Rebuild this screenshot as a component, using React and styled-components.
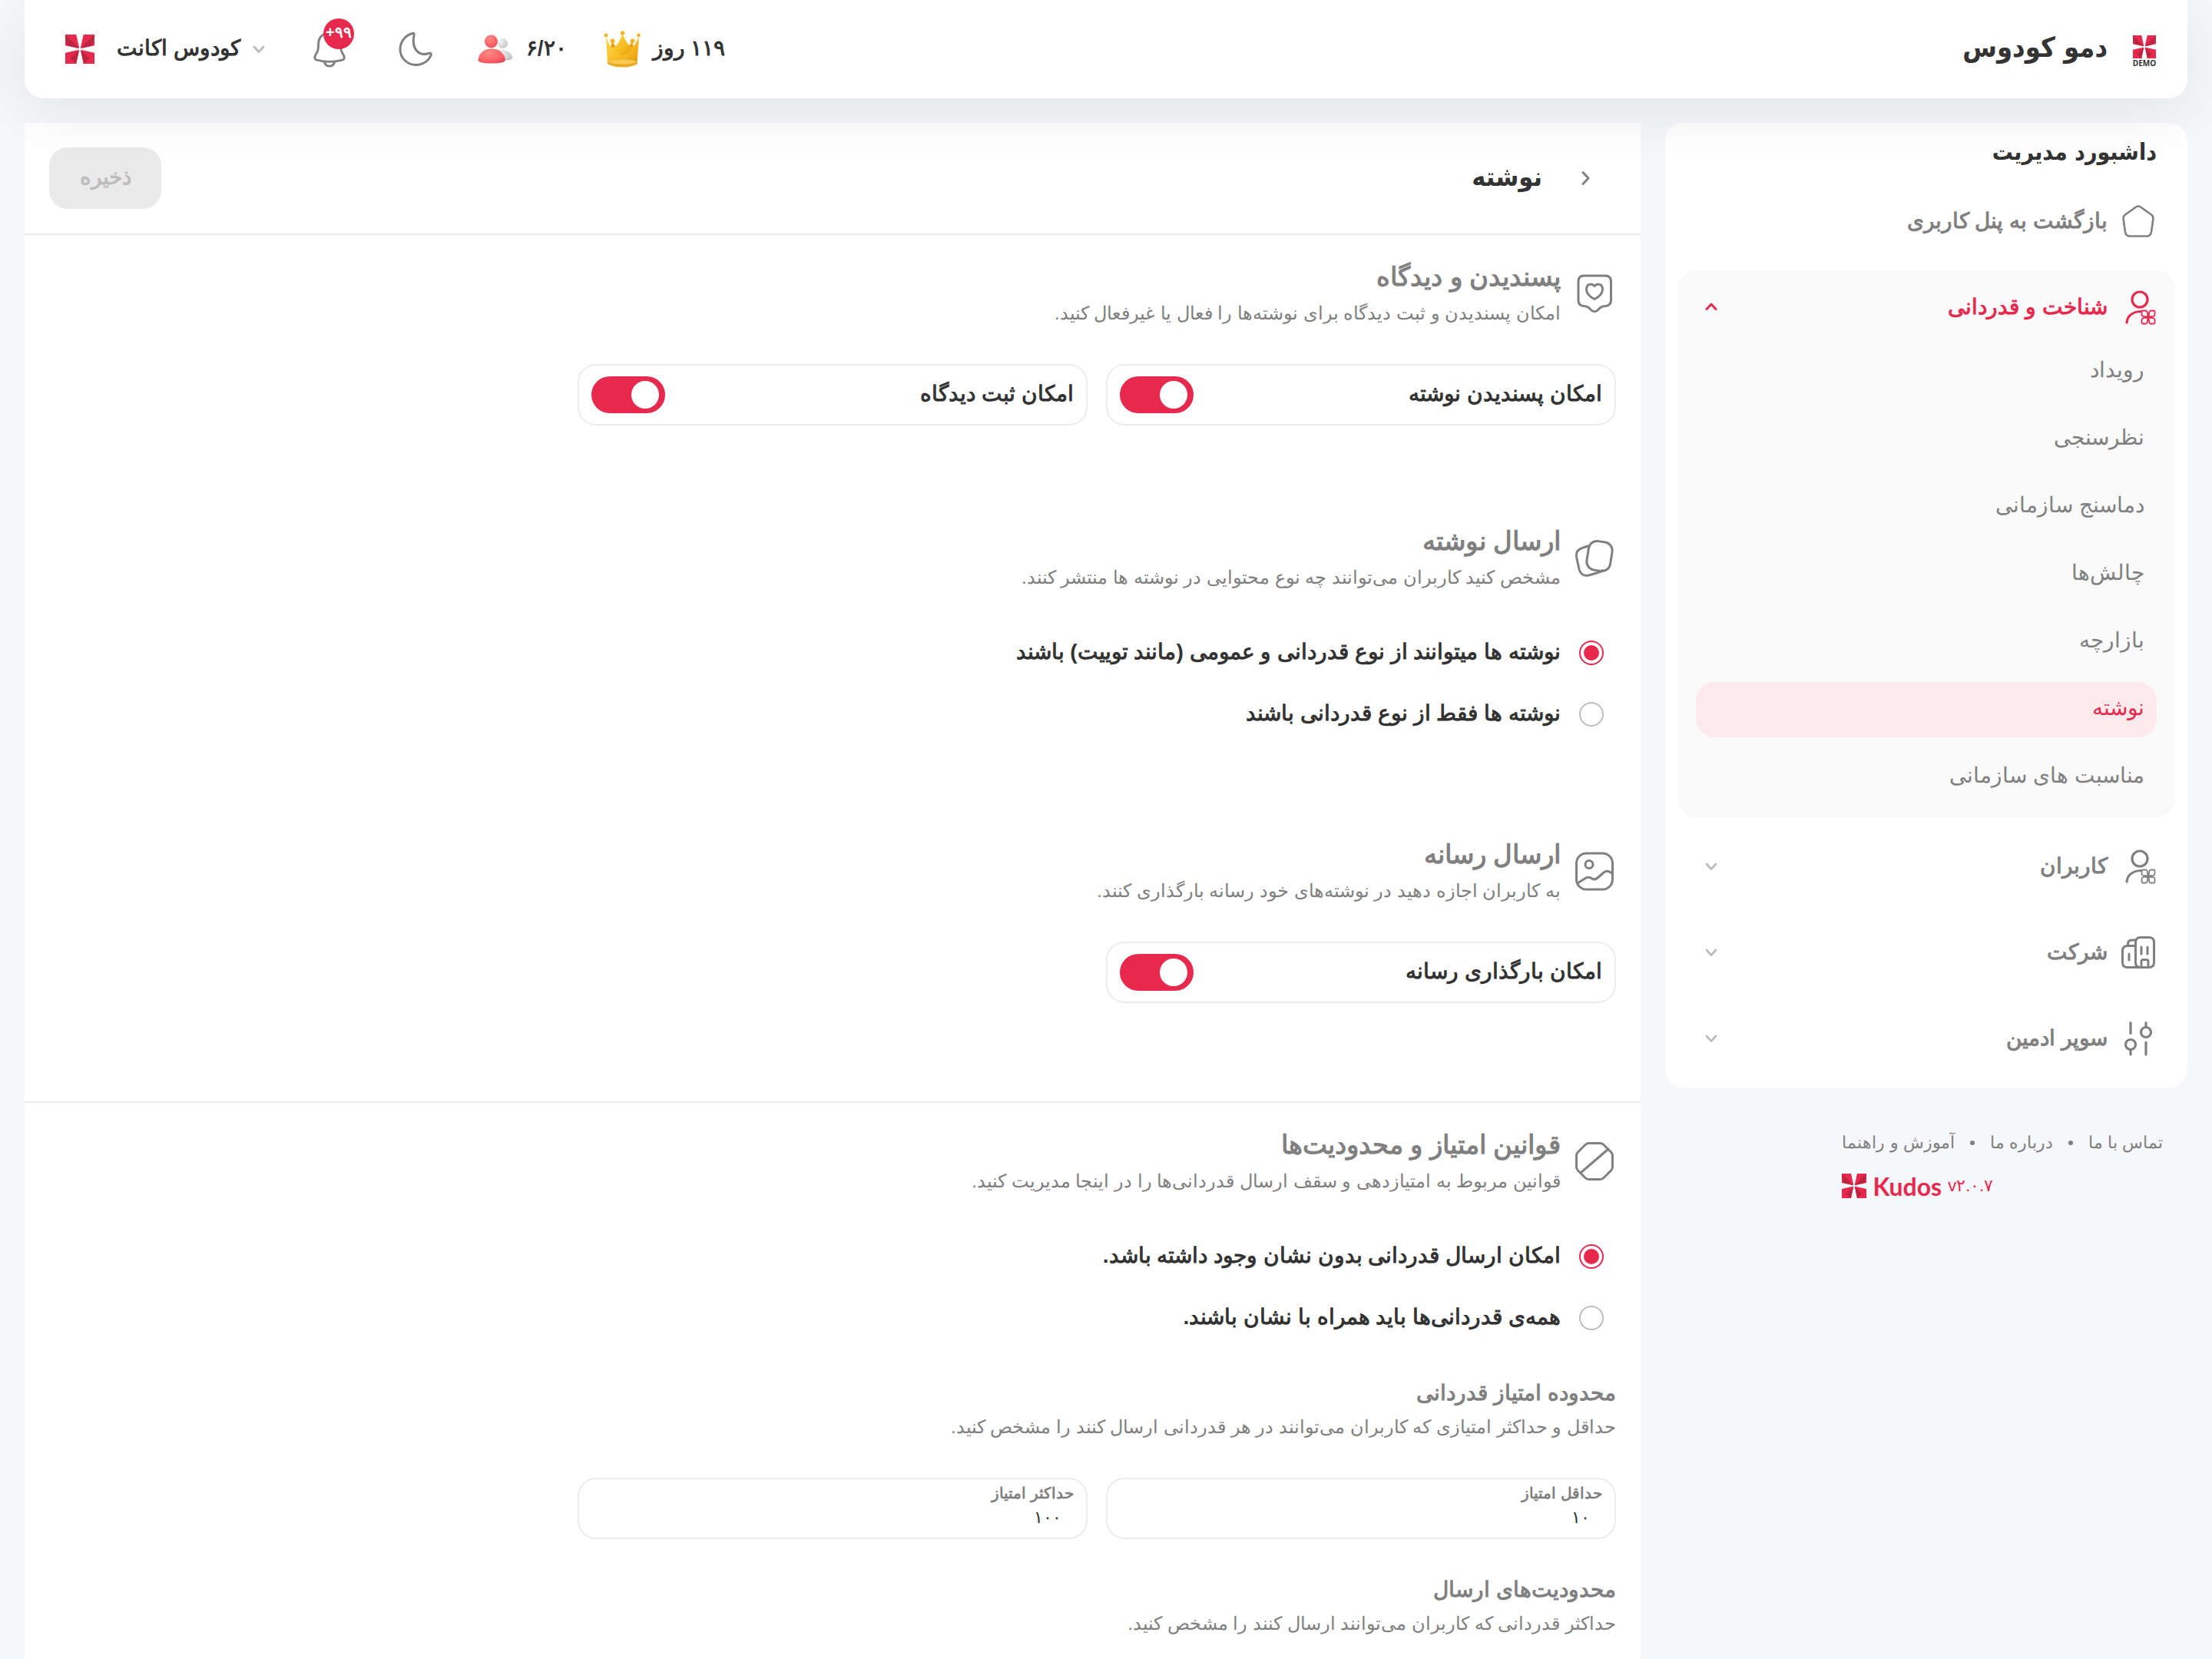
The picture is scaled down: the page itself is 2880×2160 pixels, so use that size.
import React, { useState } from 'react'
import styled, { createGlobalStyle, css } from 'styled-components'

const colors = {
  page: '#f5f7fb',
  text: '#333333',
  muted: '#808080',
  faint: '#bdbdbd',
  line: '#ededed',
  red: '#e7294d'
}

const GlobalStyle = createGlobalStyle`
  * {
    box-sizing: border-box;
  }

  body {
    margin: 0;
    background-color: ${colors.page};
    color: ${colors.text};
    font-family: 'Liberation Sans';
    font-size: 28px;
  }

  h1, h2, h3, p, ul {
    margin: 0;
    padding: 0;
  }

  ul {
    list-style: none;
  }

  button, input {
    font-family: inherit;
    color: inherit;
  }

  a {
    color: inherit;
    text-decoration: none;
  }
`

const resetButton = css`
  padding: 0;
  border: 0;
  background: none;
  cursor: pointer;
`

const strongFont = css`
  font-family: 'DejaVu Sans Condensed', 'DejaVu Sans', sans-serif;
  font-weight: 700;
  color: ${colors.text};
`

/* icons */

const Svg = styled.svg`
  display: block;
  flex: none;
  width: ${p => p.$size}px;
  height: ${p => p.$size}px;
  fill: none;
  stroke: currentColor;
  stroke-width: ${p => p.$stroke || 3};
  stroke-linecap: round;
  stroke-linejoin: round;
`

const HomeIcon = () => (
  <Svg $size={48} viewBox='0 0 48 48' $stroke={2.6}>
    <path d='M21 5.5Q24 3.5 27 5.5L41 15.5Q44 18 43.4 21L41 38Q40 43.5 35 43.5H13Q8 43.5 7 38L4.6 21Q4 18 7 15.5Z' />
  </Svg>
)

const petal = 'M36.5 36.5L35.8 30.5Q35.3 28.5 33.5 28.5H30Q28.5 28.5 28.5 30V33.5Q28.5 35.3 30.5 35.8Z'

const UserIcon = () => (
  <Svg $size={48} viewBox='0 0 48 48' $stroke={3.2}>
    <circle cx='26' cy='14' r='10' />
    <path d='M9 44C10 35 17 30 27 29.5' />
    <g strokeWidth='1.8' strokeLinejoin='miter'>
      <path d={petal} />
      <path d={petal} transform='rotate(90 37 37)' />
      <path d={petal} transform='rotate(180 37 37)' />
      <path d={petal} transform='rotate(270 37 37)' />
    </g>
  </Svg>
)

const CompanyIcon = () => (
  <Svg $size={48} viewBox='0 0 48 48' $stroke={3}>
    <path d='M27 4.5H38Q44.5 4.5 44.5 11V37Q44.5 43.5 38 43.5H27Q20.5 43.5 20.5 37V11Q20.5 4.5 27 4.5Z' />
    <path d='M27 43.5H10Q3.5 43.5 3.5 37V22Q3.5 15.5 10 15.5H20M10.5 15.5V13Q10.5 8 15.5 8H20' />
    <path d='M28 17V26M36 17V26M12 26V34M28 43V36Q28 33.5 30.5 33.5H34.5Q37 33.5 37 36V43' />
  </Svg>
)

const SlidersIcon = () => (
  <Svg $size={48} viewBox='0 0 48 48' $stroke={3.2}>
    <path d='M14 3.5V17.5M14 39V45M34 3.5V9M34 29V45' />
    <circle cx='14' cy='32' r='6.5' />
    <circle cx='34' cy='16' r='6.5' />
  </Svg>
)

const HeartIcon = () => (
  <Svg $size={56} viewBox='0 0 56 56'>
    <path d='M14 5H42Q49.5 5 49.5 12.5V37Q49.5 44 42 44.5C38 44.5 36 45.5 33 49Q28 54.5 23 49C20 45.5 18 44.5 14 44.5Q7 44 7 37V12.5Q7 5 14 5Z' />
    <path d='M28 18.5C24 14 17.5 16 17.5 22.5C17.5 29 24 33.5 28 35.5C32 33.5 38.5 29 38.5 22.5C38.5 16 32 14 28 18.5Z' />
  </Svg>
)

const CardsIcon = () => (
  <Svg $size={56} viewBox='0 0 56 56'>
    <rect x='19' y='7' width='31' height='38' rx='11' transform='rotate(9 34 26)' />
    <path d='M19 13L12 15.5Q3.5 18 4.5 27L8 43Q10.5 53 20.5 51L31 48Q36 46.5 38.5 44.5' />
  </Svg>
)

const ImageIcon = () => (
  <Svg $size={56} viewBox='0 0 56 56'>
    <rect x='4.5' y='5' width='47' height='47' rx='13' />
    <circle cx='21' cy='19.5' r='5' />
    <path d='M6 44L16 37.5Q20 35 24 37.5Q28 40.5 32 37L40 30Q45 26 51.5 31.5' />
  </Svg>
)

const ForbiddenIcon = () => (
  <Svg $size={56} viewBox='0 0 56 56'>
    <path d='M20.5 4.5H35.5Q38 4.5 40 6.5L49.5 16Q51.5 18 51.5 20.5V35.5Q51.5 38 49.5 40L40 49.5Q38 51.5 35.5 51.5H20.5Q18 51.5 16 49.5L6.5 40Q4.5 38 4.5 35.5V20.5Q4.5 18 6.5 16L16 6.5Q18 4.5 20.5 4.5ZM10 43L46 12' />
  </Svg>
)

const MoonIcon = () => (
  <Svg $size={48} viewBox='0 0 48 48'>
    <path d='M20 3.5C10 6 4 15 4 24C4 35.5 13 44.5 24.5 44.5C33.5 44.5 41 39.5 44 32C45 29.5 43.5 28.5 41 29.5C28 34 18.5 23 22 6C22.5 3.5 21.5 3 20 3.5Z' />
  </Svg>
)

const BellIcon = () => (
  <Svg $size={48} viewBox='0 0 48 50'>
    <path d='M24 3C15 3 9 9 9 18C9 26 8 28 5 33C2.5 38 5 39.5 8 40C18 42.5 30 42.5 40 40C43 39.5 45.5 38 43 33C40 28 39 26 39 18C39 9 33 3 24 3Z' />
    <path d='M17 42C19 50 29 50 31 42' />
  </Svg>
)

const chevrons = {
  down: 'M6 9L12 15.500L18 9',
  up: 'M6 14.500L12 8L18 14.500',
  right: 'M9 4.500L16 12L9 19.500'
}

const Chevron = ({ direction }) => (
  <Svg $size={24} viewBox='0 0 24 24' $stroke={3}>
    <path d={chevrons[direction]} />
  </Svg>
)

const LogoSvg = styled.svg`
  display: block;
  flex: none;
  width: ${p => p.$size}px;
  height: ${p => p.$size}px;
`

const KudosLogo = ({ size }) => (
  <LogoSvg $size={size} viewBox='0 0 40 40'>
    {[[1, 1], [-1, 1], [1, -1], [-1, -1]].map(([x, y]) => (
      <g key={`${x}${y}`} transform={`translate(20 20) scale(${x} ${y})`}>
        <path fill={colors.red} d='M-20 -20H-5L-1 -2L-2 -1L-20 -5Z' />
        <path fill='#b2243f' d={y > 0 ? 'M-20 -20L-17 -5L-1.5 -1.5Z' : 'M-5 -20L-13 -13L-1.5 -1.5Z'} opacity='0.8' />
      </g>
    ))}
  </LogoSvg>
)

const CrownIcon = () => (
  <LogoSvg $size={48} viewBox='0 0 48 48'>
    <defs>
      <linearGradient id='gold' x1='0' y1='0' x2='1' y2='1'>
        <stop offset='0' stopColor='#ffd94f' />
        <stop offset='0.6' stopColor='#f6b91f' />
        <stop offset='1' stopColor='#dc8f0c' />
      </linearGradient>
    </defs>
    <path fill='#e5a11a' d='M11 14L24 33L37 14L42 32H6Z' />
    <path fill='url(#gold)' d='M24.5 4Q30 18 38 23L35 34H13L11 23Q20 18 24.5 4Z' />
    <path fill='url(#gold)' d='M3 7Q7 20 12 23Q18 31 24 32Q33 30 36 23Q42 18 46 7L43.5 42Q38 47.5 24.5 47.5Q10 47.5 5 42Z' />
    <ellipse cx='24.5' cy='42' rx='19.5' ry='5' fill='#eaa91f' />
    <ellipse cx='24.5' cy='40.5' rx='18' ry='3' fill='#f9c952' />
    <g fill='#f2b52c'>
      <circle cx='24.5' cy='3' r='2.8' />
      <circle cx='3' cy='6' r='2.4' />
      <circle cx='45.5' cy='6' r='2.4' />
      <circle cx='11.5' cy='13.5' r='3' />
      <circle cx='37.5' cy='13.5' r='3' />
    </g>
  </LogoSvg>
)

const PeopleIcon = () => (
  <LogoSvg $size={48} viewBox='0 0 48 48'>
    <defs>
      <radialGradient id='coral' cx='0.4' cy='0.3' r='0.8'>
        <stop offset='0' stopColor='#ff8a86' />
        <stop offset='0.6' stopColor='#fb6468' />
        <stop offset='1' stopColor='#e2485a' />
      </radialGradient>
      <radialGradient id='silver' cx='0.3' cy='0.3' r='0.8'>
        <stop offset='0' stopColor='#f4f4f4' />
        <stop offset='1' stopColor='#c4c4c6' />
      </radialGradient>
    </defs>
    <path fill='url(#silver)' d='M22 38Q22 25 33 25Q44 26 46.5 35Q46 38.5 38 38.5Z' />
    <circle cx='33.5' cy='16.5' r='6.5' fill='url(#silver)' />
    <path fill='url(#coral)' d='M1.5 38Q4 23.5 19 23.5Q34 23.5 37 38Q37 42.5 19 42.5Q1.5 42.5 1.5 38Z' />
    <circle cx='18.5' cy='14' r='8.5' fill='url(#coral)' />
  </LogoSvg>
)

/* header */

const Header = styled.header`
  position: relative;
  z-index: 1;
  display: flex;
  align-items: center;
  justify-content: space-between;
  height: 128px;
  margin: 0 32px;
  padding: 0 32px 0 48px;
  border-radius: 0 0 24px 24px;
  background-color: #fff;
  box-shadow: 0 20px 80px rgba(0, 0, 0, 0.08);
`

const Brand = styled.a`
  display: flex;
  align-items: center;
  gap: 24px;
  font-size: 36px;
  line-height: 48px;
  ${strongFont}
`

const BrandName = styled.span`
  padding-bottom: 4px;
`

const BrandMark = styled.span`
  display: flex;
  flex-direction: column;
  align-items: center;
  width: 48px;
  padding-top: 6px;
  font-family: 'Open Sans', sans-serif;
  font-size: 10px;
  line-height: 12px;
`

const HeaderTools = styled.div`
  display: flex;
  align-items: center;
  gap: 40px;
`

const Stats = styled.div`
  display: flex;
  gap: 48px;
`

const Stat = styled.span`
  display: flex;
  align-items: center;
  gap: 16px;
  font-weight: 700;
`

const Actions = styled.div`
  display: flex;
  gap: 32px;
`

const IconButton = styled.button`
  ${resetButton}
  position: relative;
  display: grid;
  place-items: center;
  width: 80px;
  height: 80px;
  color: ${colors.muted};
`

const Badge = styled.span`
  position: absolute;
  top: 0;
  left: 32px;
  width: 40px;
  height: 40px;
  border-radius: 50%;
  background-color: ${colors.red};
  color: #fff;
  font-size: 20px;
  font-weight: 700;
  line-height: 36px;
  text-align: center;
`

const AccountButton = styled.button`
  ${resetButton}
  display: flex;
  align-items: center;
  gap: 24px;
  font-size: 28px;
  font-weight: 700;
  color: ${colors.text};
`

const AccountName = styled.span`
  display: flex;
  align-items: center;
  gap: 12px;

  svg {
    color: ${colors.faint};
  }
`

const LogoBox = styled.span`
  display: grid;
  place-items: center;
  width: 48px;
`

/* sidebar */

const Layout = styled.div`
  display: grid;
  grid-template-columns: repeat(4, 1fr);
  gap: 32px;
  min-height: calc(100vh - 128px);
  padding: 32px 32px 0;
`

const Sidebar = styled.aside`
  grid-column: span 1;
`

const SideCard = styled.nav`
  display: flex;
  flex-direction: column;
  gap: 16px;
  padding: 0 16px 16px;
  border-radius: 24px;
  background-color: #fff;
`

const SideTitle = styled.h2`
  height: 64px;
  padding: 0 24px;
  font-size: 30px;
  line-height: 76px;
  ${strongFont}
`

const sideRow = css`
  display: flex;
  align-items: center;
  gap: 16px;
  width: 100%;
  height: 96px;
  padding: 0 24px;
  font-size: 28px;
  font-weight: 700;
  color: ${p => p.$active ? colors.red : colors.muted};
`

const SideLink = styled.a`
  ${sideRow}
`

const SideButton = styled.button`
  ${resetButton}
  ${sideRow}
`

const SideLabel = styled.span`
  flex: 1;
  padding-bottom: 2px;
  text-align: right;
`

const SideChevron = styled.span`
  display: grid;
  place-items: center;
  width: 40px;
  color: ${p => p.$active ? colors.red : colors.faint};
`

const SideGroup = styled.div`
  border-radius: 24px;
  background-color: ${p => p.$active ? '#fafafa' : 'transparent'};
`

const SubList = styled.ul`
  display: flex;
  flex-direction: column;
  gap: 16px;
  padding: 0 24px 16px;
`

const SubLink = styled.a`
  display: block;
  height: 72px;
  padding: 0 16px;
  border-radius: 24px;
  background-color: ${p => p.$active ? '#fdeaec' : 'transparent'};
  color: ${p => p.$active ? colors.red : colors.muted};
  line-height: 68px;
`

const Footer = styled.footer`
  display: flex;
  flex-direction: column;
  align-items: flex-end;
  width: fit-content;
  padding: 48px 32px;
  color: ${colors.muted};
`

const FooterLinks = styled.div`
  display: flex;
  align-items: center;
  gap: 20px;
  height: 48px;
  font-size: 22px;
`

const Dot = styled.span`
  width: 6px;
  height: 6px;
  border-radius: 50%;
  background-color: ${colors.muted};
`

const Version = styled.div`
  display: flex;
  align-items: center;
  gap: 8px;
  height: 64px;
  color: ${colors.red};
  font-size: 22px;
`

const Wordmark = styled.span`
  font-family: Lato, sans-serif;
  font-size: 32px;
  font-weight: 700;
`

/* settings */

const Main = styled.main`
  grid-column: span 3;
  background-color: #fff;
`

const PageBar = styled.div`
  display: flex;
  align-items: center;
  justify-content: space-between;
  height: 146px;
  padding: 0 60px 0 32px;
  border-bottom: 2px solid ${colors.line};
`

const PageTitle = styled.div`
  display: flex;
  align-items: center;
  gap: 44px;
`

const BackButton = styled.button`
  ${resetButton}
  color: ${colors.muted};
`

const Title = styled.h1`
  padding-bottom: 4px;
  font-size: 34px;
  ${strongFont}
`

const SaveButton = styled.button`
  width: 146px;
  height: 80px;
  padding: 0 0 4px;
  border: 0;
  border-radius: 24px;
  background-color: #eaeaea;
  color: ${colors.faint};
  font-size: 28px;
  font-weight: 700;
`

const Panel = styled.div`
  display: flex;
  flex-direction: column;
  gap: 128px;
  padding: 32px 32px ${p => p.$last ? 64 : 128}px;
  border-bottom: ${p => p.$last ? 0 : 2}px solid ${colors.line};
`

const SectionBody = styled.section`
  display: flex;
  flex-direction: column;
  gap: 48px;
`

const SectionHead = styled.div`
  display: flex;
  gap: 16px;
  height: 88px;
  color: ${colors.muted};

  svg {
    align-self: center;
  }
`

const SectionTitle = styled.h2`
  font-size: 34px;
  line-height: 44px;
`

const SubTitle = styled.h3`
  font-size: 28px;
  line-height: 36px;
`

const Description = styled.p`
  margin-top: 4px;
  font-size: 24px;
  line-height: 44px;
`

const SubHead = styled.div`
  height: 80px;
  color: ${colors.muted};
`

const Columns = styled.div`
  display: grid;
  grid-template-columns: repeat(3, 1fr);
  gap: 24px;
`

const boxed = css`
  height: 80px;
  border: 2px solid ${colors.line};
  border-radius: 24px;
`

const ToggleBox = styled.label`
  ${boxed}
  display: flex;
  align-items: center;
  justify-content: space-between;
  padding: 0 16px;
  font-weight: 700;
  cursor: pointer;
`

const Switch = styled.input`
  appearance: none;
  display: flex;
  justify-content: flex-end;
  width: 96px;
  height: 48px;
  margin: 0;
  padding: 6px 8px;
  border-radius: 24px;
  background-color: ${colors.faint};
  cursor: pointer;

  &::before {
    content: '';
    width: 36px;
    height: 36px;
    border-radius: 50%;
    background-color: #fff;
  }

  &:checked {
    justify-content: flex-start;
    background-color: ${colors.red};
  }
`

const RadioList = styled.div`
  display: flex;
  flex-direction: column;
  gap: 16px;
`

const RadioRow = styled.label`
  display: flex;
  align-items: center;
  gap: 24px;
  width: fit-content;
  height: 64px;
  padding: 0 16px;
  font-weight: 700;
  cursor: pointer;
`

const RadioInput = styled.input`
  appearance: none;
  display: grid;
  place-items: center;
  width: 32px;
  height: 32px;
  margin: 0;
  border: 2px solid ${colors.faint};
  border-radius: 50%;

  &:checked {
    border-color: ${colors.red};
  }

  &:checked::before {
    content: '';
    width: 20px;
    height: 20px;
    border-radius: 50%;
    background-color: ${colors.red};
  }
`

const ControlText = styled.span`
  padding-bottom: 4px;
`

const FieldBox = styled.label`
  ${boxed}
  display: flex;
  flex-direction: column;
  padding: 4px 16px;
  color: ${colors.muted};
  font-size: 20px;
  font-weight: 700;
  line-height: 28px;
`

const FieldInput = styled.input`
  width: 100%;
  height: 36px;
  padding: 0 16px;
  border: 0;
  outline: 0;
  background: none;
  color: ${colors.text};
  font-size: 22px;
`

const Toggle = ({ label }) => {
  const [on, setOn] = useState(true)
  return (
    <ToggleBox>
      <ControlText>{label}</ControlText>
      <Switch type='checkbox' role='switch' checked={on} onChange={() => setOn(!on)} />
    </ToggleBox>
  )
}

const Radios = ({ name, options }) => {
  const [value, setValue] = useState(0)
  return (
    <RadioList>
      {options.map((option, i) => (
        <RadioRow key={option}>
          <RadioInput type='radio' name={name} checked={value === i} onChange={() => setValue(i)} />
          <ControlText>{option}</ControlText>
        </RadioRow>
      ))}
    </RadioList>
  )
}

const Field = ({ label, value }) => (
  <FieldBox>
    {label}
    <FieldInput type='text' inputMode='numeric' defaultValue={value} />
  </FieldBox>
)

const Section = ({ icon, title, description, children }) => (
  <SectionBody>
    <SectionHead>
      {icon}
      <div>
        <SectionTitle>{title}</SectionTitle>
        <Description>{description}</Description>
      </div>
    </SectionHead>
    {children}
  </SectionBody>
)

const SubSection = ({ title, description }) => (
  <SubHead>
    <SubTitle>{title}</SubTitle>
    <Description>{description}</Description>
  </SubHead>
)

const groups = [
  {
    title: 'شناخت و قدردانی',
    icon: <UserIcon />,
    items: ['رویداد', 'نظرسنجی', 'دماسنج سازمانی', 'چالش‌ها', 'بازارچه', 'نوشته', 'مناسبت های سازمانی']
  },
  { title: 'کاربران', icon: <UserIcon /> },
  { title: 'شرکت', icon: <CompanyIcon /> },
  { title: 'سوپر ادمین', icon: <SlidersIcon /> }
]

const SideMenu = ({ title, icon, items }) => {
  const active = Boolean(items)
  return (
    <SideGroup $active={active}>
      <SideButton type='button' $active={active} aria-expanded={active}>
        {icon}
        <SideLabel>{title}</SideLabel>
        <SideChevron $active={active}><Chevron direction={active ? 'up' : 'down'} /></SideChevron>
      </SideButton>
      {active && (
        <SubList>
          {items.map(item => (
            <li key={item}><SubLink href='#' $active={item === 'نوشته'}>{item}</SubLink></li>
          ))}
        </SubList>
      )}
    </SideGroup>
  )
}

const App = () => (
  <div dir='rtl' lang='fa'>
    <GlobalStyle />
    <Header>
      <Brand href='#'>
        <BrandMark>
          <KudosLogo size={30} />
          DEMO
        </BrandMark>
        <BrandName>دمو کودوس</BrandName>
      </Brand>
      <HeaderTools>
        <Stats>
          <Stat><ControlText>۱۱۹ روز</ControlText><CrownIcon /></Stat>
          <Stat><ControlText>۶/۲۰</ControlText><PeopleIcon /></Stat>
        </Stats>
        <Actions>
          <IconButton type='button' aria-label='حالت شب'><MoonIcon /></IconButton>
          <IconButton type='button' aria-label='اعلان‌ها'>
            <BellIcon />
            <Badge dir='ltr'>+۹۹</Badge>
          </IconButton>
        </Actions>
        <AccountButton type='button'>
          <AccountName>
            <Chevron direction='down' />
            <ControlText>کودوس اکانت</ControlText>
          </AccountName>
          <LogoBox><KudosLogo size={38} /></LogoBox>
        </AccountButton>
      </HeaderTools>
    </Header>
    <Layout>
      <Sidebar>
        <SideCard>
          <SideTitle>داشبورد مدیریت</SideTitle>
          <SideLink href='#'>
            <HomeIcon />
            <SideLabel>بازگشت به پنل کاربری</SideLabel>
          </SideLink>
          {groups.map(group => <SideMenu key={group.title} {...group} />)}
        </SideCard>
        <Footer>
          <FooterLinks>
            <a href='#'>تماس با ما</a>
            <Dot />
            <a href='#'>درباره ما</a>
            <Dot />
            <a href='#'>آموزش و راهنما</a>
          </FooterLinks>
          <Version dir='ltr'>
            <KudosLogo size={32} />
            <Wordmark>Kudos</Wordmark>
            <span>v۲.۰.۷</span>
          </Version>
        </Footer>
      </Sidebar>
      <Main>
        <PageBar>
          <PageTitle>
            <BackButton type='button' aria-label='بازگشت'><Chevron direction='right' /></BackButton>
            <Title>نوشته</Title>
          </PageTitle>
          <SaveButton type='button' disabled>ذخیره</SaveButton>
        </PageBar>
        <Panel>
          <Section
            icon={<HeartIcon />}
            title='پسندیدن و دیدگاه'
            description='امکان پسندیدن و ثبت دیدگاه برای نوشته‌ها را فعال یا غیرفعال کنید.'
          >
            <Columns>
              <Toggle label='امکان پسندیدن نوشته' />
              <Toggle label='امکان ثبت دیدگاه' />
            </Columns>
          </Section>
          <Section
            icon={<CardsIcon />}
            title='ارسال نوشته'
            description='مشخص کنید کاربران می‌توانند چه نوع محتوایی در نوشته ها منتشر کنند.'
          >
            <Radios
              name='post-type'
              options={[
                'نوشته ها میتوانند از نوع قدردانی و عمومی (مانند توییت) باشند',
                'نوشته ها فقط از نوع قدردانی باشند'
              ]}
            />
          </Section>
          <Section
            icon={<ImageIcon />}
            title='ارسال رسانه'
            description='به کاربران اجازه دهید در نوشته‌های خود رسانه بارگذاری کنند.'
          >
            <Columns>
              <Toggle label='امکان بارگذاری رسانه' />
            </Columns>
          </Section>
        </Panel>
        <Panel $last>
          <Section
            icon={<ForbiddenIcon />}
            title='قوانین امتیاز و محدودیت‌ها'
            description='قوانین مربوط به امتیازدهی و سقف ارسال قدردانی‌ها را در اینجا مدیریت کنید.'
          >
            <Radios
              name='badge-rule'
              options={[
                'امکان ارسال قدردانی بدون نشان وجود داشته باشد.',
                'همه‌ی قدردانی‌ها باید همراه با نشان باشند.'
              ]}
            />
            <SubSection
              title='محدوده امتیاز قدردانی'
              description='حداقل و حداکثر امتیازی که کاربران می‌توانند در هر قدردانی ارسال کنند را مشخص کنید.'
            />
            <Columns>
              <Field label='حداقل امتیاز' value='۱۰' />
              <Field label='حداکثر امتیاز' value='۱۰۰' />
            </Columns>
            <SubSection
              title='محدودیت‌های ارسال'
              description='حداکثر قدردانی که کاربران می‌توانند ارسال کنند را مشخص کنید.'
            />
          </Section>
        </Panel>
      </Main>
    </Layout>
  </div>
)

export default App
